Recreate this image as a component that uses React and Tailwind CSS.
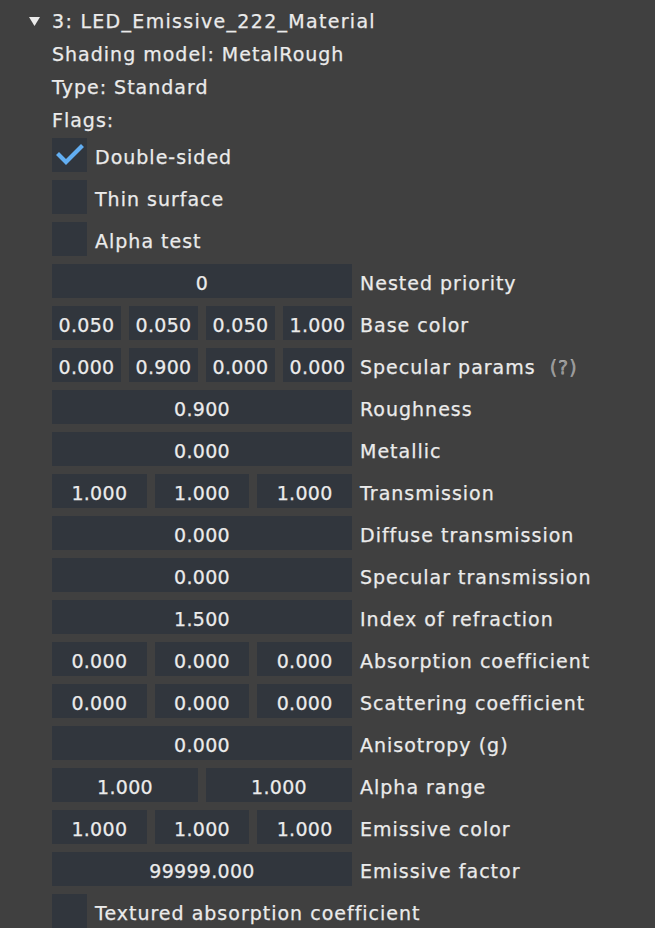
import React from 'react';

const rows = [
  { type: 'check', label: 'Double-sided', checked: true },
  { type: 'check', label: 'Thin surface' },
  { type: 'check', label: 'Alpha test' },
  { type: 'fields', values: ['0'], label: 'Nested priority' },
  { type: 'fields', values: ['0.050', '0.050', '0.050', '1.000'], label: 'Base color' },
  { type: 'fields', values: ['0.000', '0.900', '0.000', '0.000'], label: 'Specular params', help: true },
  { type: 'fields', values: ['0.900'], label: 'Roughness' },
  { type: 'fields', values: ['0.000'], label: 'Metallic' },
  { type: 'fields', values: ['1.000', '1.000', '1.000'], label: 'Transmission' },
  { type: 'fields', values: ['0.000'], label: 'Diffuse transmission' },
  { type: 'fields', values: ['0.000'], label: 'Specular transmission' },
  { type: 'fields', values: ['1.500'], label: 'Index of refraction' },
  { type: 'fields', values: ['0.000', '0.000', '0.000'], label: 'Absorption coefficient' },
  { type: 'fields', values: ['0.000', '0.000', '0.000'], label: 'Scattering coefficient' },
  { type: 'fields', values: ['0.000'], label: 'Anisotropy (g)' },
  { type: 'fields', values: ['1.000', '1.000'], label: 'Alpha range' },
  { type: 'fields', values: ['1.000', '1.000', '1.000'], label: 'Emissive color' },
  { type: 'fields', values: ['99999.000'], label: 'Emissive factor' },
  { type: 'check', label: 'Textured absorption coefficient' },
];

function CheckRow({ label, checked }) {
  return (
    <div className="flex items-center h-[34px]">
      <div className="w-[35px] h-[34px] bg-[#31363d] flex items-center justify-center">
        {checked && (
          <svg width="28" height="24" viewBox="0 0 28 24">
            <path d="M3 12 L10 19 L25 4" fill="none" stroke="#62aef2" strokeWidth="4.2" strokeLinecap="square" />
          </svg>
        )}
      </div>
      <span className="ml-[8px] pt-[5px] tracking-[1px]">{label}</span>
    </div>
  );
}

function FieldRow({ values, label, help }) {
  return (
    <div className="flex items-center h-[34px]">
      <div className="w-[300px] h-[34px] flex gap-2">
        {values.map((v, i) => (
          <div key={i} className="flex-1 h-full bg-[#31363d] flex items-center justify-center pt-[5px] tracking-[0.3px]">
            {v}
          </div>
        ))}
      </div>
      <span className="ml-[8px] pt-[5px] tracking-[1px]">{label}</span>
      {help && <span className="ml-[14px] pt-[5px] text-[#8f8f8f]">(?)</span>}
    </div>
  );
}

export default function App() {
  return (
    <div className="w-[655px] h-[928px] overflow-hidden bg-[#404040] text-[#ebebeb] text-[19px] leading-[25px] pt-[6px] font-['DejaVu_Sans',sans-serif] [font-variant-ligatures:none] [-webkit-text-stroke:0.25px_#ebebeb]">
      <div className="flex items-center h-[25px] mb-2 pt-[5px]">
        <svg className="ml-[29px] mr-[12px]" width="11" height="9" viewBox="0 0 11 9">
          <path d="M0 0 L11 0 L5.5 9 Z" fill="#ebebeb" />
        </svg>
        <span className="tracking-[1.3px]">3: LED_Emissive_222_Material</span>
      </div>
      <div className="pl-[52px] flex flex-col gap-2 tracking-[1px]">
        <div className="h-[25px] leading-[30px]">Shading model: MetalRough</div>
        <div className="h-[25px] leading-[30px]">Type: Standard</div>
        <div className="h-[25px] leading-[30px]">Flags:</div>
        {rows.map((r, i) =>
          r.type === 'check' ? (
            <CheckRow key={i} label={r.label} checked={r.checked} />
          ) : (
            <FieldRow key={i} values={r.values} label={r.label} help={r.help} />
          )
        )}
      </div>
    </div>
  );
}
